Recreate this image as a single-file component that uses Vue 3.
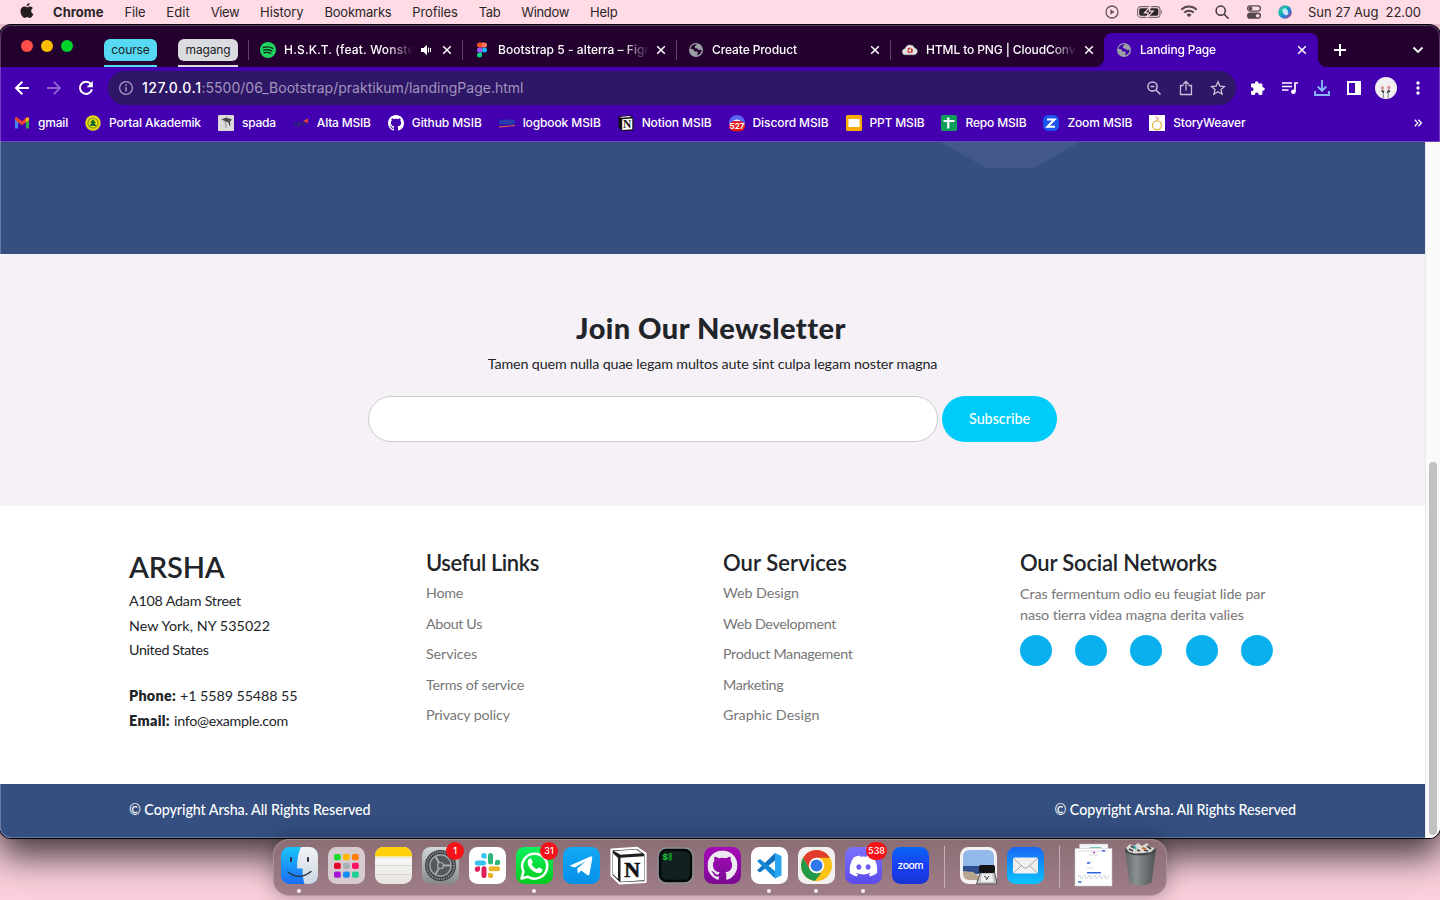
<script setup>
const menus = [
  ['Chrome', 50.5], ['File', 21], ['Edit', 23.5], ['View', 28.5], ['History', 43.5], ['Bookmarks', 67],
  ['Profiles', 45.5], ['Tab', 21.5], ['Window', 48], ['Help', 27.5],
]
const tabs = [
  { icon: 'spotify', title: 'H.S.K.T. (feat. Wonstein)', w: 146, audio: true },
  { icon: 'figma', title: 'Bootstrap 5 - alterra – Figma', w: 164 },
  { icon: 'globe', title: 'Create Product', w: 85 },
  { icon: 'cloud', title: 'HTML to PNG | CloudConvert', w: 165 },
  { icon: 'globe', title: 'Landing Page', w: 76, active: true },
]
const bookmarks = [
  ['gmail', 'gmail', 30], ['portal', 'Portal Akademik', 92], ['spada', 'spada', 34], ['alta', 'Alta MSIB', 54],
  ['github', 'Github MSIB', 70], ['logbook', 'logbook MSIB', 78], ['notion', 'Notion MSIB', 70],
  ['discord', 'Discord MSIB', 76], ['ppt', 'PPT MSIB', 55], ['repo', 'Repo MSIB', 61],
  ['zoom', 'Zoom MSIB', 65], ['story', 'StoryWeaver', 72],
]
const columns = [
  { title: 'Useful Links', w: 113, links: [['Home', 37], ['About Us', 56], ['Services', 51], ['Terms of service', 98], ['Privacy policy', 84]] },
  { title: 'Our Services', w: 124, links: [['Web Design', 76], ['Web Development', 113], ['Product Management', 129.5], ['Marketing', 60.5], ['Graphic Design', 96.5]] },
]
const dock = [
  { n: 'finder', dot: true }, { n: 'launchpad' }, { n: 'notes' }, { n: 'settings', badge: '1' }, { n: 'slack' },
  { n: 'whatsapp', dot: true, badge: '31' }, { n: 'telegram' }, { n: 'notion' }, { n: 'terminal' }, { n: 'github' },
  { n: 'vscode', dot: true }, { n: 'chrome', dot: true }, { n: 'discord', dot: true, badge: '538' }, { n: 'zoom' },
  { n: 'sep' }, { n: 'preview' }, { n: 'mail' }, { n: 'sep' }, { n: 'doc' }, { n: 'trash' },
]
const padColors = ['#20d827', '#ffb800', '#ff7d00', '#e8002a', '#a9b0b5', '#ff1461', '#a416d8', '#148cf5', '#1fcf97']

/* Tracks a label out or in until it takes the given width. */
const vFit = {
  mounted(el, { value }) {
    const width = el.getBoundingClientRect().width
    el.style.letterSpacing = (value - width) / el.textContent.length + 'px'
  },
}
</script>

<template>
  <div class="screen">
    <svg class="defs" width="0" height="0">
      <defs>
        <symbol id="cat" viewBox="0 0 16 16"><path fill-rule="evenodd" d="M8 0C3.58 0 0 3.58 0 8c0 3.54 2.29 6.53 5.47 7.59.4.07.55-.17.55-.38 0-.19-.01-.82-.01-1.49-2.01.37-2.53-.49-2.69-.94-.09-.23-.48-.94-.82-1.13-.28-.15-.68-.52-.01-.53.63-.01 1.08.58 1.23.82.72 1.21 1.87.87 2.33.66.07-.52.28-.87.51-1.07-1.78-.2-3.64-.89-3.64-3.95 0-.87.31-1.59.82-2.15-.08-.2-.36-1.02.08-2.12 0 0 .67-.21 2.2.82.64-.18 1.32-.27 2-.27s1.36.09 2 .27c1.53-1.04 2.2-.82 2.2-.82.44 1.1.16 1.92.08 2.12.51.56.82 1.27.82 2.15 0 3.07-1.87 3.75-3.65 3.95.29.25.54.73.54 1.48 0 1.07-.01 1.93-.01 2.2 0 .21.15.46.55.38A8.01 8.01 0 0 0 16 8c0-4.42-3.58-8-8-8z" /></symbol>
        <symbol id="disc" viewBox="0 0 24 24"><path fill-rule="evenodd" d="M20.3 4.4A19.8 19.8 0 0 0 15.4 2.9l-.6 1.2a18.3 18.3 0 0 0-5.5 0l-.6-1.2A19.7 19.7 0 0 0 3.7 4.4C.5 9 -.3 13.6.1 18.1a19.9 19.9 0 0 0 6 3l1.3-2.1-1.9-.9.4-.3a14.2 14.2 0 0 0 12.100 0l.4.3-1.9.9 1.300 2.100a19.800 19.800 0 0 0 6-3c.5-5.200-.8-9.700-3.500-13.700zM8 15.300c-1.200 0-2.100-1.100-2.100-2.400s.9-2.400 2.100-2.400 2.200 1.100 2.200 2.400-1 2.400-2.200 2.400zm8 0c-1.200 0-2.200-1.100-2.200-2.400s1-2.400 2.200-2.400 2.100 1.100 2.100 2.400-.9 2.400-2.100 2.400z" /></symbol>
        <linearGradient id="gBlue" x2="0" y2="1"><stop stop-color="#1ac4fb" /><stop offset="1" stop-color="#1a6cf5" /></linearGradient>
        <linearGradient id="gFace" x2="0" y2="1"><stop stop-color="#f1f3f6" /><stop offset="1" stop-color="#cdd6e0" /></linearGradient>
        <linearGradient id="gNote" x2="0" y2="1"><stop stop-color="#fff" /><stop offset="1" stop-color="#e7e4e0" /></linearGradient>
        <linearGradient id="gGray" x2="0" y2="1"><stop stop-color="#d0d8da" /><stop offset="1" stop-color="#85898a" /></linearGradient>
        <linearGradient id="gGreen" x2="0" y2="1"><stop stop-color="#0cf25c" /><stop offset="1" stop-color="#05c91e" /></linearGradient>
        <linearGradient id="gTele" x2="0" y2="1"><stop stop-color="#12a9f5" /><stop offset="1" stop-color="#0790e9" /></linearGradient>
        <linearGradient id="gGit" x2="0" y2="1"><stop stop-color="#a50ab8" /><stop offset="1" stop-color="#7b0a94" /></linearGradient>
        <linearGradient id="gDisc" x2="0" y2="1"><stop stop-color="#7b72ff" /><stop offset="1" stop-color="#5c4bea" /></linearGradient>
        <linearGradient id="gZoom" x2="0" y2="1"><stop stop-color="#0866f3" /><stop offset=".5" stop-color="#1a3ff5" /><stop offset="1" stop-color="#1834d4" /></linearGradient>
        <linearGradient id="gMail" x2="0" y2="1"><stop stop-color="#1768f5" /><stop offset="1" stop-color="#0bc4fd" /></linearGradient>
        <linearGradient id="gBin"><stop stop-color="#5e6466" /><stop offset=".35" stop-color="#8a9092" /><stop offset=".65" stop-color="#6e7476" /><stop offset="1" stop-color="#4c5254" /></linearGradient>
        <linearGradient id="gSiri" x2="1" y2="1"><stop stop-color="#c053ee" /><stop offset=".3" stop-color="#16c89c" /><stop offset=".6" stop-color="#1b83dd" /><stop offset="1" stop-color="#e52d7d" /></linearGradient>
      </defs>
    </svg>

    <header class="menubar">
      <svg class="apple" width="14" height="17" viewBox="0 0 14 17"><path fill="#231f21" d="M9.600 1c.1 1.800-1.300 3.400-2.900 3.300C6.500 2.600 8 1 9.600 1zM7.100 5.200c.7 0 1.500-.8 2.900-.8 1.200 0 2.300.7 2.900 1.600-2.500 1.500-2.100 4.900.5 5.900-.6 1.600-2 4-3.400 4-1 0-1.500-.6-2.700-.6-1.200 0-1.800.6-2.700.6C2.800 15.900.5 12.200.5 9.200c0-3 1.900-4.700 3.700-4.700 1.300 0 2.200.7 2.900.7z" /></svg>
      <nav class="menus"><span v-for="m in menus" :key="m[0]" v-fit="m[1]">{{ m[0] }}</span></nav>
      <div class="status">
        <svg width="14" height="14" viewBox="0 0 14 14"><circle cx="7" cy="7" r="6" fill="none" stroke="#66595d" stroke-width="1.300" /><path d="M5.300 4.300v5.400L9.600 7z" fill="#66595d" /></svg>
        <svg class="battery" width="26" height="12" viewBox="0 0 26 12"><rect x=".6" y=".6" width="22.400" height="10.800" rx="3.200" fill="none" stroke="#776a6e" stroke-width="1.100" /><rect x="2.200" y="2.200" width="19.200" height="7.600" rx="1.800" fill="#2b2527" /><path d="M24.200 4v4c1.200-.5 1.200-3.500 0-4z" fill="#776a6e" /><path d="M13.500.5 7.500 6.800h3.700L10 11.500l6.200-6.300h-3.900z" fill="#231f21" stroke="#ffdce5" stroke-width="1.200" /></svg>
        <svg class="wifi" width="18" height="13" viewBox="0 0 18 13" fill="none" stroke="#54484c" stroke-width="1.900"><path d="M1.300 4.700a11 11 0 0 1 15.400 0M4.200 7.700a6.800 6.800 0 0 1 9.600 0" /><path d="M6.500 9.700 9 12.200l2.500-2.500a3.600 3.600 0 0 0-5 0z" fill="#54484c" stroke="none" /></svg>
        <svg class="lens" width="14" height="14" viewBox="0 0 14 14" fill="none" stroke="#3f3538" stroke-width="1.500"><circle cx="5.700" cy="5.700" r="4.600" /><path d="m9.200 9.200 4 4" stroke-linecap="round" /></svg>
        <svg class="cc" width="16" height="14" viewBox="0 0 16 14"><rect x="1.600" y=".9" width="12.800" height="5.200" rx="2.600" fill="none" stroke="#54484c" stroke-width="1.200" /><circle cx="4.500" cy="3.500" r="1.900" fill="#54484c" /><rect x="1" y="7.600" width="14" height="6.200" rx="3.100" fill="#54484c" /><circle cx="11.700" cy="10.700" r="1.800" fill="#ffdce5" /></svg>
        <svg class="siri" width="14" height="14" viewBox="0 0 14 14"><circle cx="7" cy="7" r="6.800" fill="url(#gSiri)" /><ellipse cx="7.400" cy="7" rx="2.600" ry="3.600" fill="#e4f4ff" opacity=".85" transform="rotate(-25 7 7)" /></svg>
        <span v-fit="113" class="clock">Sun 27 Aug&nbsp; 22.00</span>
      </div>
    </header>

    <section class="window">
      <div class="strip">
        <div class="lights"><i class="red"></i><i class="yellow"></i><i class="green"></i></div>
        <div class="group course"><span v-fit="38.500">course</span></div>
        <div class="group magang"><span v-fit="45">magang</span></div>
        <div class="tabs">
          <div v-for="t in tabs" :key="t.title" class="tab" :class="{ active: t.active }">
            <svg v-if="t.icon === 'spotify'" width="16" height="16" viewBox="0 0 16 16"><circle cx="8" cy="8" r="8" fill="#1ed760" /><path d="M3.400 5.500c3-.9 6.700-.6 9.300.9M3.800 8.200c2.600-.8 5.600-.4 7.900.9M4.200 10.700c2.200-.6 4.500-.3 6.500.8" stroke="#0d2616" stroke-width="1.400" stroke-linecap="round" fill="none" /></svg>
            <svg v-else-if="t.icon === 'figma'" width="16" height="16" viewBox="0 0 16 16"><path d="M8 .5H5.500a2.500 2.500 0 0 0 0 5H8z" fill="#f24e1e" /><path d="M8 .5h2.500a2.500 2.500 0 0 1 0 5H8z" fill="#ff7262" /><path d="M8 5.500H5.500a2.500 2.500 0 0 0 0 5H8z" fill="#a259ff" /><circle cx="10.500" cy="8" r="2.500" fill="#1abcfe" /><path d="M8 10.500H5.500A2.500 2.500 0 1 0 8 13z" fill="#0acf83" /></svg>
            <svg v-else-if="t.icon === 'cloud'" width="16" height="16" viewBox="0 0 16 16"><path d="M3.500 12.800a3 3 0 0 1-.4-6A5 5 0 0 1 12.600 6a3.500 3.500 0 0 1 .2 6.800z" fill="#e4e4e4" stroke="#aaa" stroke-width=".5" /><circle cx="8" cy="8.500" r="2.100" fill="none" stroke="#c9302c" stroke-width="1.700" stroke-dasharray="2.500 .8" /></svg>
            <svg v-else width="16" height="16" viewBox="0 0 16 16"><circle cx="8" cy="8" r="7" fill="#9aa0a6" /><path :fill="t.active ? '#4400b0' : '#24002e'" d="M9 2.400 6.800 4.300 7 6.200l2.500 0 .8 1.800 2.500-.2.900.8c-.4 2.200-2 4-4.100 4.600l-.6-.9 1-1.300-.9-1.400-2.600-.2-1.200-2.200-2.900-.400C2.700 4.400 5.500 1.900 9 2.400z" /><path d="M7.500 4.800 9.300 3l2.200.6.2 2-2.400.800-1.700-.3z" fill="#9aa0a6" /></svg>
            <div class="title" :class="{ short: t.audio }"><span v-fit="t.w">{{ t.title }}</span></div>
            <svg v-if="t.audio" class="audio" width="12" height="12" viewBox="0 0 12 12"><path d="M0 4h2.500L6 .8v10.400L2.500 8H0z" fill="#fff" /><path d="M7.500 3.500v5M9.500 4v4" stroke="#fff" stroke-width="1.100" /></svg>
            <svg class="close" width="10" height="10" viewBox="0 0 10 10"><path d="m1.200 1.200 7.600 7.600m0-7.600L1.200 8.800" stroke="#fff" stroke-width="1.500" /></svg>
          </div>
        </div>
        <svg class="plus" width="14" height="14" viewBox="0 0 14 14"><path d="M7 1v12M1 7h12" stroke="#fff" stroke-width="2" /></svg>
        <svg class="chev" width="12" height="8" viewBox="0 0 12 8"><path d="m1.500 1.500 4.500 4.500 4.500-4.500" stroke="#fff" stroke-width="1.800" fill="none" /></svg>
      </div>

      <div class="toolbar">
        <svg width="16" height="16" viewBox="0 0 16 16" fill="none" stroke="#fff" stroke-width="2"><path d="M15 8H2.500M8.300 1.700 2 8l6.300 6.300" /></svg>
        <svg width="16" height="16" viewBox="0 0 16 16" fill="none" stroke="#8f66d0" stroke-width="1.800"><path d="M1 8h12.500M7.700 1.700 14 8l-6.300 6.300" /></svg>
        <svg width="16" height="16" viewBox="0 0 16 16"><path d="M13 4.200A6.100 6.100 0 1 0 14 9.300" fill="none" stroke="#fff" stroke-width="2" /><path d="M14.800 1v6.200H8.600z" fill="#fff" /></svg>
        <div class="omni">
          <svg width="16" height="16" viewBox="0 0 16 16"><circle cx="8" cy="8" r="6.400" fill="none" stroke="#a99cc4" stroke-width="1.300" /><path d="M8 7.200v4M8 4.400V6" stroke="#a99cc4" stroke-width="1.500" /></svg>
          <div class="url"><b v-fit="59.500">127.0.0.1</b><span v-fit="322">:5500/06_Bootstrap/praktikum/landingPage.html</span></div>
          <div class="tools">
            <svg width="16" height="16" viewBox="0 0 16 16" fill="none" stroke="#c9c1dc" stroke-width="1.500"><circle cx="6.500" cy="6.500" r="4.600" /><path d="m10 10 4.500 4.500M4.500 6.500h4" /></svg>
            <svg width="16" height="16" viewBox="0 0 16 16" fill="none" stroke="#c9c1dc" stroke-width="1.300"><path d="M5.500 5.500h-3v9h11v-9h-3M8 10.500V1.800M5.200 4.300 8 1.500l2.800 2.800" /></svg>
            <svg width="16" height="16" viewBox="0 0 16 16" fill="none" stroke="#c9c1dc" stroke-width="1.300"><path d="m8 1.800 1.900 4.300 4.600.4-3.500 3.100 1.100 4.600L8 11.800l-4.100 2.400L5 9.600 1.500 6.500l4.600-.4z" /></svg>
          </div>
        </div>
        <svg width="16" height="16" viewBox="0 0 16 16"><path fill="#fff" d="M5 3a1.700 1.700 0 0 1 3.400 0v.5h2.800c.7 0 1.200.5 1.200 1.200v2.500h.6a1.800 1.800 0 0 1 0 3.600h-.6v3c0 .7-.5 1.200-1.200 1.200H8.700v-.7a1.900 1.900 0 0 0-3.800 0v.7H2.200c-.7 0-1.200-.5-1.200-1.200v-2.700h.7a1.900 1.900 0 0 0 0-3.800H1V4.700c0-.7.5-1.200 1.200-1.200H5z" /></svg>
        <svg width="16" height="16" viewBox="0 0 16 16"><path d="M0 3h10M0 6.500h10M0 10h6.500M13 11.500V3h3" stroke="#fff" stroke-width="1.700" fill="none" /><circle cx="11.400" cy="11.800" r="2.300" fill="#fff" /></svg>
        <svg width="16" height="16" viewBox="0 0 16 16" fill="none" stroke="#8ab4f8" stroke-width="1.900"><path d="M8 0v10.500M3.700 6.500 8 10.800l4.300-4.300M1 11v4h14v-4" /></svg>
        <svg width="16" height="16" viewBox="0 0 16 16"><path d="M1 1h14v14H1zm2 2v10h6V3z" fill="#fff" fill-rule="evenodd" /></svg>
        <svg class="avatar" width="22" height="22" viewBox="0 0 22 22"><circle cx="11" cy="11" r="11" fill="#f1eff1" /><path d="M8 12.500 8.500 21M13.500 12l-.3 9" stroke="#777" stroke-width=".9" /><circle cx="7.400" cy="10.800" r="1.600" fill="#d99090" /><circle cx="13.800" cy="10.500" r="1.700" fill="#d99090" /><path d="m6.500 13.500 2.500 1.800M12 15.500l3-2" stroke="#3c3c3c" stroke-width="1.600" /></svg>
        <svg width="16" height="16" viewBox="0 0 16 16" fill="#fff"><circle cx="8" cy="3" r="1.700" /><circle cx="8" cy="8" r="1.700" /><circle cx="8" cy="13" r="1.700" /></svg>
      </div>

      <div class="marks">
        <div v-for="b in bookmarks" :key="b[0]" class="mark">
          <svg width="16" height="16" viewBox="0 0 16 16">
            <g v-if="b[0] === 'gmail'"><path d="M1 4v9.500h3.200V6.500z" fill="#4285f4" /><path d="M11.800 6.500v7H15V4z" fill="#34a853" /><path d="M1 5V3.500c0-1.300 1.500-1.600 2.400-.9L8 6.200l4.600-3.600c.9-.7 2.400-.4 2.400.9V5L8 10.200z" fill="#ea4335" /><path d="M11.800 3.200C13 2 15 2 15 4v1l-3.200 2.400z" fill="#fbbc04" /></g>
            <g v-else-if="b[0] === 'portal'"><circle cx="8" cy="8" r="7.700" fill="#e5d911" /><circle cx="8" cy="8" r="5.600" fill="#8a9a18" /><circle cx="8" cy="8" r="4.400" fill="#f0e31a" /><path d="M8 4 5 8h1.500L4.500 11h7l-2-3H11z" fill="#186b2c" /></g>
            <g v-else-if="b[0] === 'spada'"><rect width="16" height="16" rx="1" fill="#dcdbd9" /><path d="m3.500 4.500 4.500-2 6 2-2 2 .3 4-1 .2-.8-3.200L8 6.800 6.800 6z" fill="#4a4a48" /><path d="M6.800 6.500 8 9.500v3.500" fill="none" stroke="#888" /></g>
            <g v-else-if="b[0] === 'alta'"><circle cx="3.500" cy="9" r="2" fill="none" stroke="#223069" stroke-width="1.200" /><path d="M6.500 11V8.500q2-2 3.500 0V11M11 9h3.500" stroke="#223069" stroke-width="1.200" fill="none" /><path d="m10 6 5-2.500V8z" fill="#e34a2c" /></g>
            <use v-else-if="b[0] === 'github'" href="#cat" fill="#fff" />
            <g v-else-if="b[0] === 'logbook'"><path d="M0 4.500h16v5.300H0z" fill="#1e2fa0" /><path d="M1 6h14M1 8h13" stroke="#3b5cc0" stroke-width=".7" /><path d="m0 11.500 16-1.500v.9L0 12.500z" fill="#e67345" /></g>
            <g v-else-if="b[0] === 'notion'"><path d="M.5 1.500 12 .2 15.500 3v12.500L4 16 .5 12.500z" fill="#111" /><path d="M1.800 2 11.500 1l1.700 1L3.800 2.800z" fill="#fff" /><path d="M4.200 4.200 14.300 3.500V14.300L4.200 14.900z" fill="#fff" /><text x="9.200" y="13.300" class="serif" font-size="11.500" text-anchor="middle">N</text></g>
            <g v-else-if="b[0] === 'discord'"><circle cx="8" cy="8" r="8" fill="#5865f2" /><path d="M4 6q4-3 8 0" fill="#fff" /><rect y="6.200" width="16" height="10" rx="5" fill="#ea1515" /><text x="8" y="14.200" class="count" font-size="8" text-anchor="middle">527</text></g>
            <g v-else-if="b[0] === 'ppt'"><rect width="16" height="16" rx="1.500" fill="#f9ab00" /><rect x="2.500" y="4" width="11" height="8" fill="#fff" /></g>
            <g v-else-if="b[0] === 'repo'"><rect width="16" height="16" rx="1.500" fill="#0f9d58" /><path d="M7.300 2.500v11M2.500 6h11" stroke="#fff" stroke-width="2.200" /></g>
            <g v-else-if="b[0] === 'zoom'"><rect width="16" height="16" rx="5.500" fill="#1a55ee" /><path d="M4 4.500h7.500L4.500 11.700H12" fill="none" stroke="#fff" stroke-width="2.100" /></g>
            <g v-else><path d="M0 0h16v16H0z" fill="#fff" /><circle cx="8" cy="10.300" r="4.500" fill="none" stroke="#e2b33e" stroke-width="1.300" /><path d="m6 1.500 3 2-2.500 2.200M10 2.500 8.500 5" stroke="#e39a86" fill="none" /></g>
          </svg>
          <span v-fit="b[2]">{{ b[1] }}</span>
        </div>
        <svg class="more" width="8" height="8" viewBox="0 0 8 8"><path d="m.8.8 3 3.200-3 3.200m3.600-6.400 3 3.200-3 3.200" stroke="#fff" stroke-width="1.300" fill="none" /></svg>
      </div>

      <div class="viewport">
        <main class="page">
          <div class="hero"><svg width="140" height="26" viewBox="0 0 140 26"><path d="M0 0h140L95 26H46z" fill="#42578a" /></svg></div>
          <div class="news">
            <h2 v-fit="268.500">Join Our Newsletter</h2>
            <p v-fit="449.500">Tamen quem nulla quae legam multos aute sint culpa legam noster magna</p>
            <div class="form"><div class="field"></div><div class="btn"><span v-fit="61">Subscribe</span></div></div>
          </div>
          <footer class="foot">
            <div class="col">
              <h3 v-fit="95.500">ARSHA</h3>
              <address>
                <span v-fit="112">A108 Adam Street</span>
                <span v-fit="141">New York, NY 535022</span>
                <span v-fit="79.500">United States</span>
                <div class="pair"><b v-fit="47">Phone:</b><span v-fit="117.500">+1 5589 55488 55</span></div>
                <div class="pair last"><b v-fit="41">Email:</b><span v-fit="114">info@example.com</span></div>
              </address>
            </div>
            <div v-for="c in columns" :key="c.title" class="col">
              <h4 v-fit="c.w">{{ c.title }}</h4>
              <ul><li v-for="l in c.links" :key="l[0]"><span v-fit="l[1]">{{ l[0] }}</span></li></ul>
            </div>
            <div class="col">
              <h4 v-fit="197">Our Social Networks</h4>
              <div class="about"><span v-fit="245.500">Cras fermentum odio eu feugiat lide par</span><span v-fit="224">naso tierra videa magna derita valies</span></div>
              <div class="social"><i v-for="n in 5" :key="n"></i></div>
            </div>
          </footer>
          <div class="copy"><span v-fit="241.500">© Copyright Arsha. All Rights Reserved</span><span v-fit="241.500">© Copyright Arsha. All Rights Reserved</span></div>
        </main>
        <div class="scroll"><div class="thumb"></div></div>
      </div>
    </section>

    <div class="dock">
      <template v-for="(d, i) in dock" :key="i">
        <div v-if="d.n === 'sep'" class="sep"></div>
        <div v-else class="app">
          <svg width="37" height="37" viewBox="0 0 37 37">
            <g v-if="d.n === 'finder'"><rect width="37" height="37" rx="8.500" fill="url(#gBlue)" /><path d="M20 0h8.500A8.500 8.500 0 0 1 37 8.500v20a8.500 8.500 0 0 1-8.500 8.500H23.500q-2-6-2-15.500H16Q16 8 20 0z" fill="url(#gFace)" /><path d="M10 11v3M27 11v3" stroke="#24343f" stroke-width="2" stroke-linecap="round" /><path d="M7 25q11.500 9 23-.5" stroke="#24343f" stroke-width="1.300" fill="none" stroke-linecap="round" /></g>
            <g v-else-if="d.n === 'launchpad'"><rect width="37" height="37" rx="8.500" fill="#d7cbd0" /><rect v-for="(c, k) in padColors" :key="c" :x="6 + (k % 3) * 9" :y="7 + Math.floor(k / 3) * 8.700" width="6.800" height="6.300" rx="1.800" :fill="c" /></g>
            <g v-else-if="d.n === 'notes'"><rect width="37" height="37" rx="8.500" fill="url(#gNote)" /><path d="M0 9.500v-1A8.500 8.500 0 0 1 8.500 0h20A8.500 8.500 0 0 1 37 8.500v1z" fill="#ffcf0b" /><path d="M0 11.200h37" stroke="#bbb" stroke-dasharray="1 1" stroke-width=".7" /><path d="M0 18.500h37M0 27.500h37" stroke="#d8d6d3" /></g>
            <g v-else-if="d.n === 'settings'"><rect width="37" height="37" rx="8.500" fill="url(#gGray)" /><circle cx="18.500" cy="18.500" r="15.500" fill="#3b3e40" /><circle cx="18.500" cy="18.500" r="13.600" fill="none" stroke="#8d9193" stroke-width="1.800" stroke-dasharray="1.400 1" /><circle cx="18.500" cy="18.500" r="10.700" fill="#55595b" stroke="#a3a7a9" stroke-width="1.400" /><path d="M18.500 18.500h10.300M18.500 18.500 13.400 9.500M18.500 18.500 13.400 27.500" stroke="#a9adaf" stroke-width="2" /><circle cx="18.500" cy="18.500" r="3" fill="#56595b" stroke="#a9adaf" stroke-width="1.200" /></g>
            <g v-else-if="d.n === 'slack'"><rect width="37" height="37" rx="8.500" fill="#fff" /><g stroke-width="5" stroke-linecap="round"><path d="M8.300 16h6.200" stroke="#36c5f0" /><path d="M21.500 8.500V15" stroke="#2eb67d" /><path d="M22 21.800H28.500" stroke="#ecb22e" /><path d="M15 21.800v6.700" stroke="#e01e5a" /></g><path d="M15 11.500a2.700 2.700 0 1 1 2.600-2.700v2.700z" fill="#36c5f0" /><path d="M26 18v-2.600a2.600 2.600 0 1 1 2.600 2.600z" fill="#2eb67d" /><path d="M19 26h2.600a2.600 2.600 0 1 1-2.600 2.600z" fill="#ecb22e" /><path d="M11 19.500V22a2.600 2.600 0 1 1-2.600-2.500z" fill="#e01e5a" /></g>
            <g v-else-if="d.n === 'whatsapp'"><rect width="37" height="37" rx="8.500" fill="url(#gGreen)" /><path d="m5.500 31.500 2-6.800A12.500 12.500 0 1 1 12 29.700z" fill="none" stroke="#fff" stroke-width="2.500" stroke-linejoin="round" /><path d="M13.200 11.800c.9-.9 1.800-.7 2.200.1l1.300 3c.3.900-1.400 1.900-1 2.600 1.300 2.400 2.800 3.700 5 4.500.9.300 1.700-1.900 2.500-1.600l3 1.500c.8.500-.2 3.500-2.200 4-3 .9-7.300-1.500-9.700-4.400-2.500-3-3.800-7-1.100-9.700z" fill="#fff" /></g>
            <g v-else-if="d.n === 'telegram'"><rect width="37" height="37" rx="8.500" fill="url(#gTele)" /><path d="m6.500 18.800 21-9.200c1.200-.5 2 .2 1.800 1.500l-2.800 16c-.2 1.300-1.300 1.600-2.300.9l-6-4.400-3.200 3.100-.8-5.200 9-7.600-11.500 6.600z" fill="#fff" /></g>
            <g v-else-if="d.n === 'notion'"><path d="M1.500 2.500 27 .8 35.500 6.500v28.500L9.500 36.300 1.500 28.500z" fill="#1e1e1e" stroke="#fff" stroke-width="2.200" stroke-linejoin="round" /><path d="m4 4 22-1.500 6 3.800-21.500 1.400z" fill="#fff" /><path d="M3 6.300 8 11v21l-5-4.800z" fill="#fff" /><path d="M10.500 10.800 34 9.300v24l-23.500 1.400z" fill="#fff" /><text x="22.300" y="30" class="serif heavy" font-size="22" text-anchor="middle">N</text></g>
            <g v-else-if="d.n === 'terminal'"><rect x=".5" y=".5" width="36" height="36" rx="8.500" fill="#8c979b" /><rect x="1.800" y="1.800" width="33.400" height="33.400" rx="7.500" fill="#050808" /><rect x="4.200" y="4.200" width="28.600" height="28.600" rx="5" fill="#12201f" /><text x="5.500" y="13" class="mono" font-size="9">$</text><path d="M11.500 6H15v7.500h-3.500z" fill="#137c24" /></g>
            <g v-else-if="d.n === 'github'"><rect width="37" height="37" rx="8.500" fill="url(#gGit)" /><use href="#cat" x="3.500" y="3.500" width="30" height="30" fill="#eeeaf1" /></g>
            <g v-else-if="d.n === 'vscode'"><rect width="37" height="37" rx="8.500" fill="#fff" /><path d="m24 6 6.500 3v19.500L24 31.500z" fill="#2aa5f0" /><path d="M24 6v7.500L9 25.500 6 23.500z" fill="#1272bd" /><path d="M24 31.500V24L9 12 6 14z" fill="#1687d4" /></g>
            <g v-else-if="d.n === 'chrome'"><rect width="37" height="37" rx="8.500" fill="#f2f0f0" /><circle cx="18.500" cy="18.500" r="15.500" fill="#fbc116" /><path d="M5.100 10.700a15.500 15.500 0 0 1 26.800 0H18.500L11.700 22.400z" fill="#e33b2e" /><path d="M5.100 10.700 11.800 22.400l6.700 4 5-.7-6.700 8.200A15.500 15.500 0 0 1 5.100 10.700z" fill="#229a4a" /><circle cx="18.500" cy="18.500" r="7.700" fill="#fff" /><circle cx="18.500" cy="18.500" r="6" fill="#3178ea" /></g>
            <g v-else-if="d.n === 'discord'"><rect width="37" height="37" rx="8.500" fill="url(#gDisc)" /><use href="#disc" x="4.500" y="5" width="28" height="28" fill="#fff" /></g>
            <g v-else-if="d.n === 'zoom'"><rect width="37" height="37" rx="8.500" fill="url(#gZoom)" /><text x="18.500" y="21.800" class="zoomtxt" font-size="10.500" text-anchor="middle" textLength="26">zoom</text></g>
            <g v-else-if="d.n === 'preview'"><rect width="37" height="37" rx="8.500" fill="#f3f1f1" /><path d="M3 9a6 6 0 0 1 6-6h19a6 6 0 0 1 6 6v11H3z" fill="#93b8ea" /><path d="M3 19h31v8H3z" fill="#304f8e" /><path d="m3 24 10 1 12 8H9a6 6 0 0 1-6-6z" fill="#b9a68e" /><path d="m20.500 25-4 12h20.500l-2.500-12z" fill="#c4c4c4" stroke="#555" /><rect x="19" y="18" width="16" height="8" rx="2" fill="#151515" /><path d="M22 27h10l1.500 8H20.500z" fill="#eee" /><path d="m24 29 4 3m1-3-3 4" stroke="#444" /></g>
            <g v-else-if="d.n === 'mail'"><rect width="37" height="37" rx="8.500" fill="url(#gMail)" /><rect x="6" y="10.500" width="25" height="16" rx="1.800" fill="#efefef" /><path d="m6.500 11.500 10 9q2 1.500 4 0l10-9M6.500 26l8-7.500M30.500 26l-8-7.500" stroke="#a4a4a4" fill="none" /></g>
            <g v-else-if="d.n === 'doc'"><path d="M4.500-3H33V6H4.500z" fill="#f5f5f7" stroke="#bdbdc5" stroke-width=".5" /><path d="M0 1.500h37V39H0z" fill="#fff" stroke="#c8c8cf" stroke-width=".6" /><path d="M15 .5h11" stroke="#74c9b8" /><path d="M3 4h30M14 8h10M12 15h6M12 21h6" stroke="#d0d0da" stroke-width=".8" /><path d="M18 5.500h2" stroke="#a443b5" stroke-width="1.500" /><path d="M27 3.700h3M12 16h3M12 25.800h14M3 35h3.500" stroke="#2f66dc" stroke-width="1.500" /><path d="M3 29h31M5 31h28" stroke="#a9adb8" stroke-width=".7" stroke-dasharray="3 2" /></g>
            <g v-else><path d="M3 1h31l-4.500 35q-11 5-22 0z" fill="url(#gBin)" /><path d="M3 1q15.500 8 31 0l-.7 5q-15 5-29.600 0z" fill="#454a4c" /><path d="m4 1 4-4 4 2 4-3 4 3 5-3 3 4 5 1-4 4-8 1-8 .5-6-1.500z" fill="#dcdad7" /><path d="m7 2 4 2M25-1l4 3M15 3l3 1M22 3l4 1M9-1l3 2" stroke="#444" stroke-width="1.800" /><path d="m12-1 2 3" stroke="#26b19d" stroke-width="2" /><path d="m20 1 4 1" stroke="#c96a30" stroke-width="2" /></g>
          </svg>
          <span v-if="d.badge" class="badge" :class="{ wide: d.badge.length > 2 }">{{ d.badge }}</span>
          <i v-if="d.dot" class="dot"></i>
        </div>
      </template>
    </div>
  </div>
</template>

<style>
html, body { margin: 0; overflow: hidden; }
</style>

<style scoped>
* { box-sizing: border-box; }
svg { display: block; flex: none; overflow: visible; }
span, b, h2, h3, h4, p { white-space: nowrap; }
.screen { position: relative; width: 1440px; height: 900px; overflow: hidden; background: #fbd0dc; font-family: Inter, "Liberation Sans", sans-serif; display: flex; flex-direction: column; }
.defs { position: absolute; }
.menubar { position: relative; z-index: 2; height: 24px; flex: none; display: flex; align-items: center; background: #ffdce5; color: #2b2527; font-size: 13px; padding: 0 19px 1px 20px; }
.apple { margin-top: -2px; }
.menus { display: flex; gap: 20.900px; margin-left: 19px; }
.menus span:first-child { font-weight: 700; }
.status { display: flex; align-items: center; margin-left: auto; }
.battery { margin-left: 18px; }
.wifi { margin-left: 17px; }
.lens { margin-left: 17px; }
.cc { margin-left: 17px; margin-right: -6px; }
.siri { margin-left: 22px; }
.clock { margin-left: 16px; }

.window { position: relative; z-index: 1; margin-top: 1px; height: 813px; flex: none; display: flex; flex-direction: column; border-radius: 11px; overflow: hidden; box-shadow: 0 0 0 1px #050005, 0 16px 36px 2px rgba(0, 0, 0, .75); background: #4400b0; }
.window::after { content: ""; position: absolute; inset: 0; border-radius: 11px; box-shadow: inset 0 0 0 1px rgba(255, 255, 255, .24); pointer-events: none; }
.strip { height: 42px; flex: none; background: #24002e; display: flex; align-items: center; }
.lights { display: flex; gap: 8px; margin: 0 31px 1px 21px; }
.lights i { width: 12px; height: 12px; border-radius: 50%; }
.red { background: #ff4f48; }
.yellow { background: #ffbd02; }
.green { background: #02d22c; }
.group { position: relative; z-index: 0; display: flex; justify-content: center; height: 28px; line-height: 22px; align-self: flex-end; border-bottom: 2px solid; color: #202124; font-size: 12px; }
.group::after { content: ""; position: absolute; z-index: -1; left: 0; right: 0; top: 0; height: 22px; border-radius: 6px; }
.course { width: 53px; border-color: #57d9f3; }
.magang { width: 60px; border-color: #dadce0; margin-left: 21px; }
.course::after { background: #57d9f3; }
.magang::after { background: #dadce0; }
.tabs { display: flex; margin-left: 10px; height: 34px; align-self: flex-end; }
.tab { width: 214px; display: flex; align-items: center; padding: 0 10px 0 12px; position: relative; color: #fff; font-size: 12px; font-weight: 500; }
.tab:not(.active)::before { content: ""; position: absolute; left: 0; top: 7px; width: 1px; height: 20px; background: #5f4368; }
.tab.active { background: #4400b0; border-radius: 8px 8px 0 0; padding-right: 11px; }
.tab.active::before, .tab.active::after { content: ""; position: absolute; bottom: 0; width: 8px; height: 8px; }
.tab.active::before { left: -8px; background: radial-gradient(circle at 0 0, transparent 7.500px, #4400b0 8px); }
.tab.active::after { right: -8px; background: radial-gradient(circle at 100% 0, transparent 7.500px, #4400b0 8px); }
.title { width: 151px; margin-left: 8px; overflow: hidden; line-height: 18px; -webkit-mask-image: linear-gradient(90deg, #000 125px, transparent 151px); mask-image: linear-gradient(90deg, #000 125px, transparent 151px); }
.title.short { width: 129px; -webkit-mask-image: linear-gradient(90deg, #000 103px, transparent 129px); mask-image: linear-gradient(90deg, #000 103px, transparent 129px); }
.title span { display: inline-block; }
.audio { margin-left: 8px; }
.close { margin-left: auto; }
.plus { margin: 8px 0 0 15px; }
.chev { margin: 8px 0 0 65px; }

.toolbar { height: 42px; flex: none; display: flex; align-items: center; gap: 16px; padding: 0 14px; }
.omni { width: 1128px; height: 34px; border-radius: 17px; background: #2e1766; display: flex; align-items: center; padding: 0 10px; margin: 0 -2px 0 -2px; }
.url { display: flex; margin: -2px 0 0 8px; font-size: 14px; color: #a195bd; }
.url b { font-weight: 500; color: #fff; }
.tools { display: flex; gap: 16px; margin-left: auto; }
.avatar { margin: 0 -3px; }
.marks { height: 33px; flex: none; display: flex; align-items: center; padding: 0 18px 5px 14px; gap: 16.950px; border-bottom: 1px solid #6a45b8; color: #fff; font-size: 12px; font-weight: 500; }
.mark { display: flex; align-items: center; gap: 8px; }
.more { margin-left: auto; }

.viewport { flex: 1; display: flex; background: #fff; font-family: Lato, "Open Sans", sans-serif; color: #212529; font-size: 14.300px; }
.page { width: 1425px; display: flex; flex-direction: column; }
.hero { height: 112px; background: #344f80; padding-left: 940px; }
.news { height: 252px; background: #f6f1f6; display: flex; flex-direction: column; align-items: center; }
.news h2 { margin: 56px 0 0 -3px; font-size: 29px; font-weight: 900; line-height: 36px; }
.news p { margin: 8px 0 0; line-height: 20px; }
.form { display: flex; gap: 4px; margin-top: 22px; }
.field { width: 570px; height: 46px; border: 1px solid #ccc; border-radius: 23px; background: #fff; }
.btn { width: 115px; height: 46px; border-radius: 23px; background: #00ccf9; color: #fff; font-weight: 500; text-align: center; line-height: 45px; }
.btn span { display: inline-block; }
.foot { height: 278px; padding: 43px 0 0 129px; display: flex; }
.col { width: 297px; display: flex; flex-direction: column; align-items: flex-start; }
.col h3 { margin: 0; font-size: 29px; font-weight: 600; line-height: 36px; }
.col h4 { margin: 0; font-size: 22px; font-weight: 600; line-height: 28px; }
address { font-style: normal; margin-top: 4px; display: flex; flex-direction: column; align-items: flex-start; line-height: 24.500px; }
.pair { display: flex; gap: 4px; margin-top: 21.500px; }
.pair.last { margin-top: 0; }
.pair b { font-weight: 800; }
ul { list-style: none; margin: 1.200px 0 0; padding: 0; color: #777; line-height: 30.500px; }
li { height: 30.500px; }
li span { display: inline-block; }
.about { display: flex; flex-direction: column; align-items: flex-start; line-height: 21px; margin-top: 6px; color: #777; }
.social { display: flex; gap: 23.200px; margin-top: 10px; }
.social i { width: 32px; height: 31px; border-radius: 50%; background: #09b0ed; }
.copy { height: 54px; background: #344f80; color: #fff; font-weight: 500; display: flex; justify-content: space-between; padding: 16px 129px 0; line-height: 20px; }
.scroll { width: 15px; background: #fafafa; border-left: 1px solid #e8e8e8; padding: 320px 3px 0; }
.thumb { height: 373px; width: 8px; border-radius: 4px; background: #c1c1c1; }

.dock { position: absolute; z-index: 3; left: 273px; top: 839px; width: 894px; height: 57px; border-radius: 16px; background: linear-gradient(#8b6d74, #a07e88); box-shadow: inset 0 0 0 1px rgba(255, 255, 255, .22), 0 0 22px rgba(0, 0, 0, .35); display: flex; gap: 10px; padding: 8px 8px 0; }
.app { position: relative; width: 37px; height: 37px; flex: none; }
.sep { width: 1px; height: 42px; margin: -1px 4.800px 0 5px; background: #c5adb4; }
.badge { position: absolute; top: -5px; right: -5px; width: 18px; height: 18px; border-radius: 9px; background: #f5131a; color: #fff; font-size: 9px; font-weight: 500; line-height: 18px; text-align: center; }
.badge.wide { width: 21px; right: -5px; }
.dot { position: absolute; left: 16px; top: 42px; width: 4px; height: 4px; border-radius: 50%; background: #f8eef1; }
.serif { font-family: "Liberation Serif", serif; font-weight: 700; fill: #111; }
.heavy { stroke: #111; stroke-width: .6px; }
.mono { font-family: "Liberation Mono", monospace; font-weight: 700; fill: #1bd63a; }
.count { font-family: Inter, sans-serif; font-weight: 700; fill: #fff; }
.zoomtxt { font-family: Inter, sans-serif; font-weight: 500; fill: #fff; }
</style>
